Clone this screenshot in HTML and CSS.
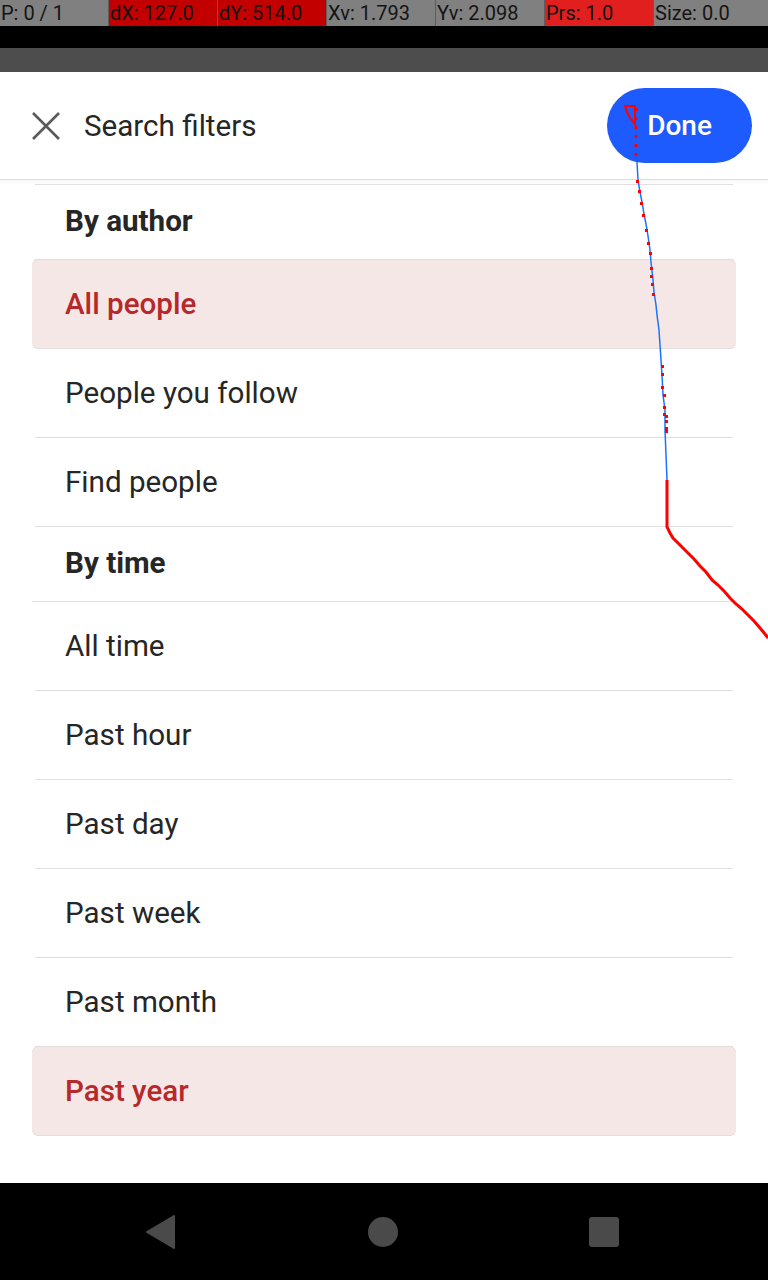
FILE: index.html
```html
<!DOCTYPE html>
<html lang="en">
<head>
<meta charset="utf-8">
<title>Search filters</title>
<link rel="stylesheet" href="styles.css">
</head>
<body>
<div class="screen">
  <div class="ptr-bar">
    <div class="cell">P: 0 / 1</div>
    <div class="cell red">dX: 127.0</div>
    <div class="cell red">dY: 514.0</div>
    <div class="cell">Xv: 1.793</div>
    <div class="cell">Yv: 2.098</div>
    <div class="cell bright">Prs: 1.0</div>
    <div class="cell last">Size: 0.0</div>
  </div>
  <div class="status-black"></div>
  <div class="status-gray"></div>

  <header class="topbar">
    <svg class="close" viewBox="0 0 30 30" width="30" height="30" aria-hidden="true">
      <path d="M2 2 L28 28 M28 2 L2 28" stroke="#5a5a5a" stroke-width="2.6" fill="none" stroke-linecap="butt"/>
    </svg>
    <div class="title">Search filters</div>
    <button class="done">Done</button>
  </header>

  <main class="list">
    <div class="row head">By author</div>
    <div class="row sel">All people</div>
    <div class="row">People you follow</div>
    <div class="row">Find people</div>
    <div class="row head wide">By time</div>
    <div class="row">All time</div>
    <div class="row">Past hour</div>
    <div class="row">Past day</div>
    <div class="row">Past week</div>
    <div class="row">Past month</div>
    <div class="row sel">Past year</div>
  </main>

  <nav class="navbar">
    <svg width="30" height="34" viewBox="0 0 30 34" aria-hidden="true"><path d="M28 1 L28 33 L1 17 Z" fill="#4a4a4a" stroke="#4a4a4a" stroke-width="2" stroke-linejoin="round"/></svg>
    <div class="home"></div>
    <div class="recents"></div>
  </nav>

  <svg class="trace" width="768" height="1280" viewBox="0 0 768 1280" aria-hidden="true">
    <path d="M625 106 L635 106 L635 124 L630 118 L627 112 Z" fill="none" stroke="#ff0000" stroke-width="2"/>
    <path d="M636 108 L636 162" stroke="#ff0000" stroke-width="3" stroke-dasharray="3 6" fill="none"/>
    <polyline points="637,162 638,180 640,192 642,202 644,214 646,224 648,236 650,250 651,262 653,280 654,292 656,305 657,315 659,330 660,345 661,360 662,375 663,395 665,410 665,430 666,455 667,480 667,503" fill="none" stroke="#1a73ff" stroke-width="1.5"/>
    <g fill="#ff0000">
      <rect x="636" y="180" width="3" height="3"/>
      <rect x="638" y="190" width="3" height="3"/>
      <rect x="640" y="202" width="3" height="3"/>
      <rect x="642" y="214" width="3" height="3"/>
      <rect x="645" y="229" width="3" height="3"/>
      <rect x="647" y="242" width="3" height="3"/>
      <rect x="649" y="252" width="3" height="3"/>
      <rect x="650" y="267" width="3" height="3"/>
      <rect x="650" y="275" width="3" height="3"/>
      <rect x="651" y="283" width="3" height="3"/>
      <rect x="652" y="293" width="3" height="3"/>
      <rect x="661" y="365" width="3" height="3"/>
      <rect x="661" y="373" width="3" height="3"/>
      <rect x="661" y="386" width="3" height="3"/>
      <rect x="663" y="394" width="3" height="3"/>
      <rect x="663" y="406" width="3" height="3"/>
      <rect x="663" y="413" width="3" height="3"/>
      <rect x="665" y="415" width="3" height="3"/>
      <rect x="665" y="420" width="3" height="3"/>
      <rect x="665" y="427" width="3" height="6"/>
    </g>
    <polyline points="667,480 667,527 670,533 673,538 677,542 682,547 688,553 694,559 700,566 706,572 712,580 718,585 724,591 730,598 736,604 742,609 748,615 754,621 760,628 765,634 768,638" fill="none" stroke="#ff0000" stroke-width="3"/>
  </svg>
</div>
</body>
</html>
```

FILE: styles.css
```css
* { box-sizing: border-box; }

html, body {
  margin: 0;
  padding: 0;
  background: #ffffff;
}

.screen {
  position: relative;
  width: 768px;
  height: 1280px;
  overflow: hidden;
  display: flex;
  flex-direction: column;
  font-family: Roboto, "Noto Sans", sans-serif;
  color: #262626;
  background: #ffffff;
}

.ptr-bar {
  display: flex;
  height: 26px;
  background: #808080;
}

.cell {
  flex: 0 0 109px;
  font-size: 20px;
  line-height: 27px;
  padding-left: 1px;
  color: #141414;
  background: #808080;
  border-left: 1px solid #5e5e5e;
  white-space: nowrap;
  overflow: hidden;
}

.cell:first-child { border-left: none; flex-basis: 108px; }
.cell.last { flex: 1 1 auto; }
.cell.red { background: #c20000; }
.cell.bright { background: #e21f1f; }

.status-black {
  height: 22px;
  background: #000000;
}

.status-gray {
  height: 24px;
  background: #4d4d4d;
}

.topbar {
  height: 108px;
  display: flex;
  align-items: center;
  padding: 0 16px 0 31px;
  border-bottom: 1px solid #dedede;
  box-shadow: 0 2px 4px rgba(0, 0, 0, 0.04);
  position: relative;
  z-index: 1;
}

.close {
  flex: none;
}

.title {
  flex: 1;
  margin-left: 23px;
  font-size: 29.6px;
  color: #262626;
}

.done {
  width: 145px;
  height: 75px;
  border: none;
  border-radius: 38px;
  background: #1e5bff;
  color: #ffffff;
  font-family: Roboto, sans-serif;
  font-size: 28px;
  font-weight: 500;
  padding: 0;
}

.list {
  padding: 4px 32px 0;
  display: flex;
  flex-direction: column;
}

.list::before {
  content: "";
  display: block;
  height: 1px;
  margin: 0 3px;
  background: #e0e0e0;
}

.row {
  height: 89px;
  display: flex;
  align-items: center;
  padding-left: 30px;
  margin: 0 3px;
  font-size: 29.6px;
  color: #262626;
  border-bottom: 1px solid #e0e0e0;
}

.row.head {
  height: 75px;
  font-weight: 700;
  padding-bottom: 2px;
}

.row.wide {
  margin: 0 3px 0 0;
  padding-left: 33px;
}

.row.sel {
  margin: 0;
  padding-left: 33px;
  background: #f6e7e7;
  color: #b7282a;
  font-weight: 500;
  border-radius: 6px;
  border-bottom: 1px solid #e3dede;
  box-shadow: 0 -1px 0 #e2dddd;
}

.navbar {
  margin-top: auto;
  height: 97px;
  background: #000000;
  display: flex;
  align-items: center;
  justify-content: space-between;
  padding: 0 149px 0 146px;
}

.home {
  width: 30px;
  height: 30px;
  border-radius: 50%;
  background: #4a4a4a;
}

.recents {
  width: 30px;
  height: 30px;
  border-radius: 3px;
  background: #4a4a4a;
}

.trace {
  position: absolute;
  left: 0;
  top: 0;
  pointer-events: none;
  z-index: 5;
}
```
